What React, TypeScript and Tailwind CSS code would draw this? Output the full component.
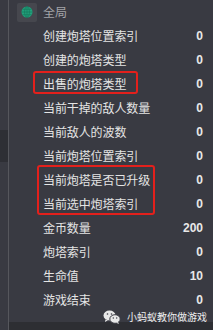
import React from 'react'

const rows = [
  { label: '创建炮塔位置索引', value: '0' },
  { label: '创建的炮塔类型', value: '0' },
  { label: '出售的炮塔类型', value: '0' },
  { label: '当前干掉的敌人数量', value: '0' },
  { label: '当前敌人的波数', value: '0' },
  { label: '当前炮塔位置索引', value: '0' },
  { label: '当前炮塔是否已升级', value: '0' },
  { label: '当前选中炮塔索引', value: '0' },
  { label: '金币数量', value: '200' },
  { label: '炮塔索引', value: '0' },
  { label: '生命值', value: '10' },
  { label: '游戏结束', value: '0' },
]

function Globe() {
  return (
    <svg width="12" height="12" viewBox="0 0 12 12">
      <circle cx="6" cy="6" r="5.5" fill="#22a07c" />
      <g stroke="#157a5c" strokeWidth="0.7" fill="none">
        <ellipse cx="6" cy="6" rx="2.4" ry="5.5" />
        <line x1="6" y1="0.5" x2="6" y2="11.5" />
        <line x1="0.5" y1="6" x2="11.5" y2="6" />
        <line x1="1.5" y1="3.3" x2="10.5" y2="3.3" />
        <line x1="1.5" y1="8.7" x2="10.5" y2="8.7" />
      </g>
    </svg>
  )
}

function WeChat() {
  return (
    <svg width="18" height="14" viewBox="0 0 18 14">
      <ellipse cx="6.5" cy="5.5" rx="6" ry="5" fill="#e8e8e8" />
      <path d="M2.5 9.5 L2 12 L5 10.2 Z" fill="#e8e8e8" />
      <ellipse cx="12" cy="9" rx="5.2" ry="4.3" fill="#e8e8e8" stroke="#393a42" strokeWidth="1" />
      <path d="M15 12 L16 14 L13.2 12.8 Z" fill="#e8e8e8" />
      <circle cx="4.5" cy="4" r="0.8" fill="#393a42" />
      <circle cx="8.5" cy="4" r="0.8" fill="#393a42" />
      <circle cx="10.3" cy="8" r="0.7" fill="#393a42" />
      <circle cx="13.7" cy="8" r="0.7" fill="#393a42" />
    </svg>
  )
}

export default function App() {
  return (
    <div
      className="relative w-[213px] h-[330px] overflow-hidden bg-[#393a42] flex"
      style={{ fontFamily: '"Noto Sans CJK SC", "Noto Sans", sans-serif' }}
    >
      {/* left gutter */}
      <div className="w-[9px] flex flex-col border-r border-[#56575d] bg-[#393a42]">
        <div className="h-[130px]" />
        <div className="h-[32px] bg-[#2e2f35]" />
      </div>

      <div className="flex-1 flex flex-col">
        <div className="h-[24px] flex items-center pl-[8px]">
          <div className="w-[20px] h-[19px] bg-[#46474e] flex items-center justify-center rounded-[2px]">
            <Globe />
          </div>
          <span className="ml-[6px] text-[12px] text-[#a3a4a8]">全局</span>
        </div>

        {rows.map((r, i) => (
          <div key={i} className="h-[24px] flex items-center justify-between pl-[34px] pr-[10px]">
            <span className="text-[12px] text-[#e4e4e4] tracking-[-0.1px]">{r.label}</span>
            <span className="text-[12px] font-bold text-[#e8e8e8]" style={{ fontFamily: '"Liberation Sans", sans-serif' }}>{r.value}</span>
          </div>
        ))}

        <div className="flex-1" />
        <div className="h-[8px] bg-[#2d2e33]" />
      </div>

      {/* highlight boxes */}
      <div className="absolute left-[33px] top-[71px] w-[105px] h-[23px] border-2 border-[#e3201c] rounded-[3px]" />
      <div className="absolute left-[37px] top-[165px] w-[118px] h-[50px] border-2 border-[#e3201c] rounded-[3px]" />

      {/* watermark */}
      <div className="absolute left-[103px] top-[309px] flex items-center gap-[6px]">
        <WeChat />
        <span className="text-[10px] text-[#f0f0f0]">小蚂蚁教你做游戏</span>
      </div>
    </div>
  )
}
